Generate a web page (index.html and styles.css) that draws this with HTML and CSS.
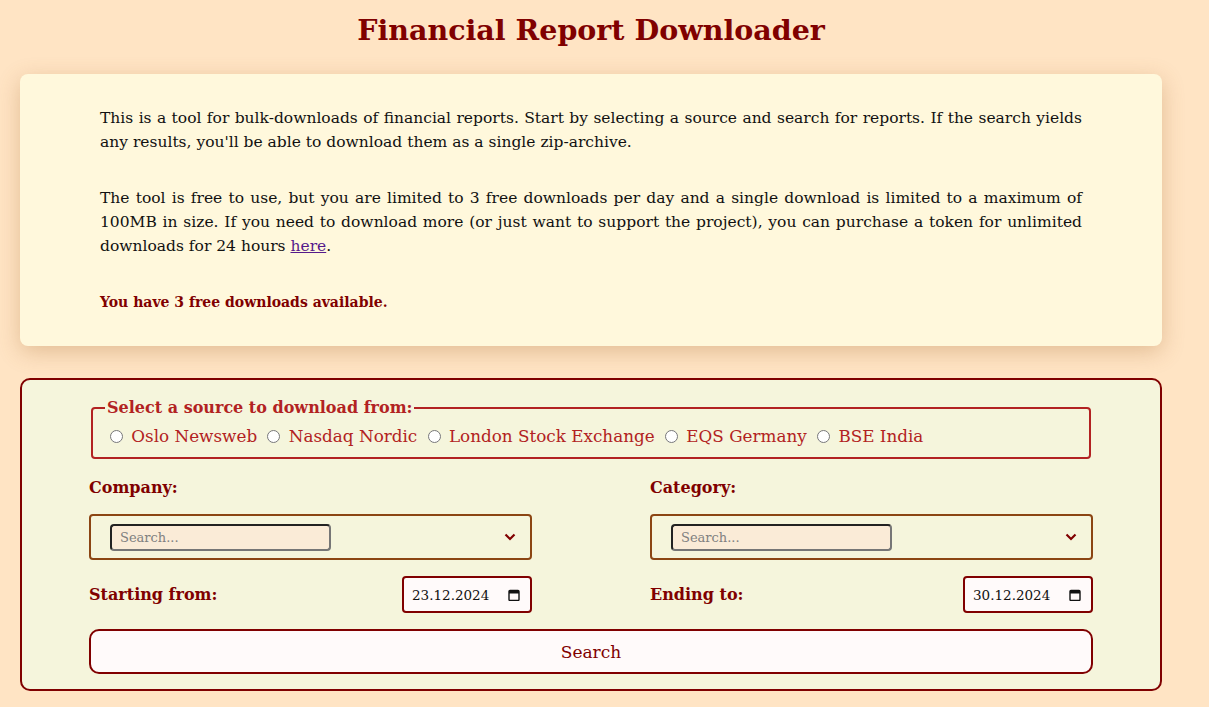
FILE: index.html
```html
<!DOCTYPE html>
<html lang="en">
<head>
    <meta charset="UTF-8">
    <meta name="viewport" content="width=device-width, initial-scale=1.0">
    <title>Financial Report Downloader</title>
    <link rel="stylesheet" href="styles.css">
</head>
<body>
    <div class="page">
        <h1>Financial Report Downloader</h1>
        <div class="intro">
            <p>This is a tool for bulk-downloads of financial reports. Start by selecting a source and search for reports. If the search yields any results, you'll be able to download them as a single zip-archive.</p>
            <p>The tool is free to use, but you are limited to 3 free downloads per day and a single download is limited to a maximum of 100MB in size. If you need to download more (or just want to support the project), you can purchase a token for unlimited downloads for 24 hours <a href="#token">here</a>.</p>
            <p class="quota">You have 3 free downloads available.</p>
        </div>
        <form class="search-form">
            <fieldset class="sources">
                <legend>Select a source to download from:</legend>
                <label><input type="radio" name="source" value="oslo"> Oslo Newsweb</label>
                <label><input type="radio" name="source" value="nasdaq"> Nasdaq Nordic</label>
                <label><input type="radio" name="source" value="lse"> London Stock Exchange</label>
                <label><input type="radio" name="source" value="eqs"> EQS Germany</label>
                <label><input type="radio" name="source" value="bse"> BSE India</label>
            </fieldset>
            <div class="fields">
                <div class="field">
                    <div class="field-label">Company:</div>
                    <div class="combo">
                        <input type="text" class="combo-search" placeholder="Search...">
                        <svg class="chevron" width="12" height="8" viewBox="0 0 12 8"><path d="M1.5 1.5 L6 6 L10.5 1.5" fill="none" stroke="#800000" stroke-width="2.2"/></svg>
                    </div>
                    <div class="date-row">
                        <span class="field-label">Starting from:</span>
                        <div class="date-input">
                            <span>23.12.2024</span>
                            <svg width="12" height="12" viewBox="0 0 12 12"><rect x="1" y="1.5" width="10" height="10" rx="1" fill="none" stroke="#111" stroke-width="1.4"/><rect x="1" y="1.5" width="10" height="3" fill="#111"/></svg>
                        </div>
                    </div>
                </div>
                <div class="field">
                    <div class="field-label">Category:</div>
                    <div class="combo">
                        <input type="text" class="combo-search" placeholder="Search...">
                        <svg class="chevron" width="12" height="8" viewBox="0 0 12 8"><path d="M1.5 1.5 L6 6 L10.5 1.5" fill="none" stroke="#800000" stroke-width="2.2"/></svg>
                    </div>
                    <div class="date-row">
                        <span class="field-label">Ending to:</span>
                        <div class="date-input">
                            <span>30.12.2024</span>
                            <svg width="12" height="12" viewBox="0 0 12 12"><rect x="1" y="1.5" width="10" height="10" rx="1" fill="none" stroke="#111" stroke-width="1.4"/><rect x="1" y="1.5" width="10" height="3" fill="#111"/></svg>
                        </div>
                    </div>
                </div>
            </div>
            <button type="button" class="search-btn">Search</button>
        </form>
    </div>
</body>
</html>
```

FILE: styles.css
```css
body {
    margin: 0;
    padding: 0;
    background-color: #ffe4c4;
    font-family: "DejaVu Serif", serif;
    color: #111;
}
.page {
    width: 1142px;
    margin-left: 20px;
    padding-top: 10px;
}
h1 {
    margin: 0 0 24px;
    font-size: 28.5px;
    line-height: 40px;
    text-align: center;
    color: #800000;
}
.intro {
    background-color: #fff8dc;
    border-radius: 8px;
    padding: 32px 80px 32px;
    box-shadow: 0 6px 22px rgba(160, 100, 40, 0.3);
}
.intro p {
    margin: 0 0 32px;
    font-size: 15.5px;
    line-height: 24px;
    text-align: justify;
}
.intro a {
    color: #551a8b;
}
.intro .quota {
    margin: 0;
    font-size: 14px;
    font-weight: bold;
    color: #800000;
}
.search-form {
    margin-top: 32px;
    background-color: #f5f5dc;
    border: 2px solid #800000;
    border-radius: 10px;
    padding: 17px 67px 15px;
}
.sources {
    margin: 0 2px;
    padding: 6px 12px 10px;
    border: 2px solid #b22222;
    border-radius: 4px;
    color: #b22222;
    font-size: 16.8px;
    line-height: 22px;
}
.sources legend {
    padding: 0 2px;
    font-weight: bold;
    font-size: 16px;
}
.sources input {
    margin: 0 3px 0 5px;
    vertical-align: -1px;
}
.fields {
    display: grid;
    grid-template-columns: 1fr 1fr;
    column-gap: 118px;
    margin-top: 18px;
}
.field-label {
    font-size: 16px;
    line-height: 22px;
    font-weight: bold;
    color: #800000;
}
.field > .field-label {
    margin-bottom: 15px;
}
.combo {
    display: flex;
    align-items: center;
    justify-content: space-between;
    height: 42px;
    padding: 0 14px 0 19px;
    border: 2px solid #8b4513;
    border-radius: 4px;
}
.combo-search {
    width: 221px;
    height: 27px;
    box-sizing: border-box;
    padding: 0 8px;
    border: 2px solid #767676;
    border-top-color: #222;
    border-left-color: #222;
    border-radius: 4px;
    background-color: #faebd7;
    font-family: inherit;
    font-size: 13px;
}
.combo-search::placeholder {
    color: #808080;
}
.date-row {
    display: flex;
    align-items: center;
    justify-content: space-between;
    margin-top: 16px;
}
.date-input {
    display: flex;
    align-items: center;
    justify-content: space-between;
    width: 130px;
    height: 37px;
    box-sizing: border-box;
    padding: 0 10px 0 8px;
    border: 2px solid #800000;
    border-radius: 4px;
    background-color: #fffafa;
    font-size: 13.5px;
}
.search-btn {
    display: block;
    width: 100%;
    height: 45px;
    margin-top: 16px;
    border: 2px solid #800000;
    border-radius: 10px;
    background-color: #fffafa;
    color: #800000;
    font-family: inherit;
    font-size: 17px;
}
```
